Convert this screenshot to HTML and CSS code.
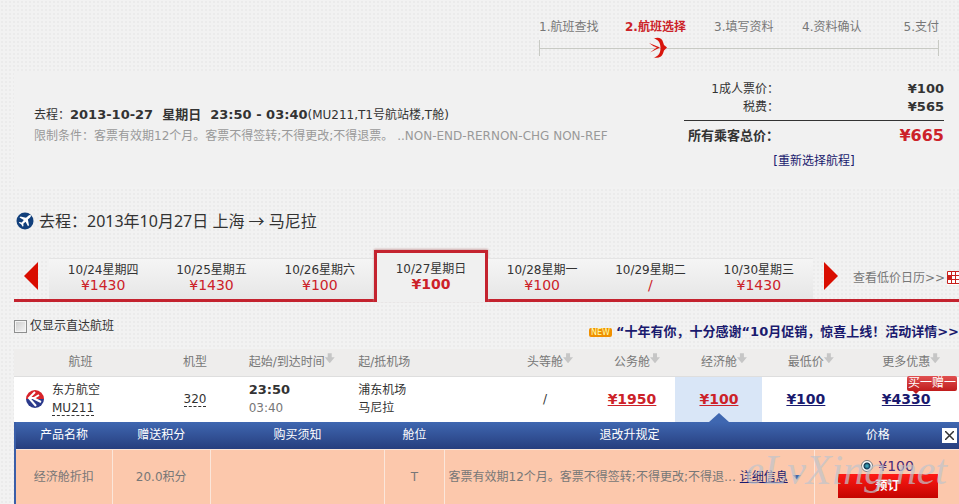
FILE: index.html
```html
<!DOCTYPE html>
<html lang="zh-CN">
<head>
    <meta charset="UTF-8">
    <meta name="viewport" content="width=device-width, initial-scale=1.0">
    <title>航班选择</title>
    <link rel="stylesheet" href="styles.css">
</head>

<body>

    <!-- Booking steps -->
    <header class="top">
        <div class="steps">
            <ol class="step-list">
                <li>1.航班查找</li>
                <li class="current">2.航班选择</li>
                <li>3.填写资料</li>
                <li>4.资料确认</li>
                <li>5.支付</li>
            </ol>
            <div class="step-line">
                <svg class="swallow" width="19" height="22" viewBox="0 0 19 22">
                    <path fill="#d8150c" d="M5 1.500c4-1.500 8-.5 9 3.500l1 3 3 2.500-3 3-1 3c-1.500 4-5 5-9 4 4-1 6.500-4 6.500-9.500S9 2.500 5 1.500z"/>
                    <path fill="#d8150c" d="M0 6l11 4.500L1 15.500l6-4.500z"/>
                    <path fill="#f1f1f1" d="M4 9l4 1.600L5 12l1.500-1.200z"/>
                </svg>
            </div>
        </div>
    </header>

    <main>
        <!-- Chosen flight and price -->
        <section class="summary">
            <div class="trip">
                <p>去程：<strong>2013-10-27&nbsp; 星期日&nbsp; 23:50 - 03:40</strong>(MU211,T1号航站楼,T舱)</p>
                <p class="limits">限制条件：客票有效期12个月。客票不得签转;不得更改;不得退票。 ..NON-END-RERNON-CHG NON-REF</p>
            </div>
            <div class="total">
                <dl>
                    <dt>1成人票价：</dt><dd>¥100</dd>
                    <dt>税费：</dt><dd>¥565</dd>
                </dl>
                <dl class="sum">
                    <dt>所有乘客总价：</dt><dd>¥665</dd>
                </dl>
                <a href="#">[重新选择航程]</a>
            </div>
        </section>

        <h1>
            <svg width="18" height="18" viewBox="0 0 18 18">
                <circle cx="9" cy="9" r="8.5" fill="#12407c"/>
                <path fill="#fff" d="M14.800 3.200c-.9-.6-2 0-3 1L10 5.800 4.500 4.500l-1 1 4.300 2.600-2 2.300-2.300-.3-.7.700 2.400 1.500 1.500 2.500.8-.7-.2-2.300 2.300-2 2.400 4.400 1-1-1.100-5.600L13.600 6c1-1 1.800-2 1.200-2.800z"/>
            </svg>
            去程：2013年10月27日 上海 → 马尼拉
        </h1>

        <!-- Dates -->
        <nav class="dates">
            <button class="arrow prev" aria-label="前一周"></button>
            <ul>
                <li><a href="#">10/24星期四<b>¥1430</b></a></li>
                <li><a href="#">10/25星期五<b>¥1430</b></a></li>
                <li><a href="#">10/26星期六<b>¥100</b></a></li>
                <li class="active"><a href="#">10/27星期日<b>¥100</b></a></li>
                <li><a href="#">10/28星期一<b>¥100</b></a></li>
                <li><a href="#">10/29星期二<b>/</b></a></li>
                <li><a href="#">10/30星期三<b>¥1430</b></a></li>
            </ul>
            <button class="arrow next" aria-label="后一周"></button>
            <a class="calendar" href="#">查看低价日历&gt;&gt;
                <svg width="17" height="14" viewBox="0 0 17 14">
                    <path fill="#fff" d="M0 0h17v14H0z"/>
                    <path fill="none" stroke="#c8201c" d="M.5 .5h16v12H.5zM0 4.500h17M0 8.500h17M4.500 0v13M8.500 0v13M12.500 0v13"/>
                    <path fill="#c8201c" d="M1 5h3v3H1z"/>
                </svg>
            </a>
        </nav>

        <div class="options">
            <label><input type="checkbox">仅显示直达航班</label>
            <a href="#"><span class="new">NEW</span>“十年有你，十分感谢“10月促销，惊喜上线！活动详情&gt;&gt;</a>
        </div>

        <!-- Flights -->
        <table class="flights">
            <colgroup>
                <col class="w-flight"><col class="w-plane"><col class="w-time"><col class="w-port">
                <col class="w-fare"><col class="w-fare"><col class="w-fare"><col class="w-fare"><col>
            </colgroup>
            <thead>
                <tr>
                    <th>航班</th>
                    <th>机型</th>
                    <th class="left"><span class="sort">起始/到达时间</span></th>
                    <th class="left">起/抵机场</th>
                    <th><span class="sort">头等舱</span></th>
                    <th><span class="sort">公务舱</span></th>
                    <th><span class="sort">经济舱</span></th>
                    <th><span class="sort">最低价</span></th>
                    <th class="more"><span class="sort">更多优惠</span></th>
                </tr>
            </thead>
            <tbody>
                <tr>
                    <td>
                        <div class="airline">
                            <svg width="20" height="20" viewBox="0 0 20 20">
                                <path fill="#d8232a" d="M1 10a9 9 0 0 1 18 0z"/>
                                <path fill="#2b3a8c" d="M1 10a9 9 0 0 0 18 0z"/>
                                <path fill="none" stroke="#fff" stroke-width="2" d="M10 3L4 9l7 8M5 9h4l5-3M8 9l8 4"/>
                            </svg>
                            <span>东方航空<br><abbr>MU211</abbr></span>
                        </div>
                    </td>
                    <td><abbr>320</abbr></td>
                    <td class="left"><strong>23:50</strong><br><span class="arrive">03:40</span></td>
                    <td class="left">浦东机场<br>马尼拉</td>
                    <td>/</td>
                    <td><a class="fare red" href="#">¥1950</a></td>
                    <td class="chosen"><a class="fare red" href="#">¥100</a></td>
                    <td><a class="fare" href="#">¥100</a></td>
                    <td class="more"><a class="fare" href="#">¥4330</a><span class="gift">买一赠一</span></td>
                </tr>
            </tbody>
        </table>

        <!-- Products of the chosen fare -->
        <div class="products">
            <table>
                <colgroup>
                    <col class="w-name"><col class="w-points"><col class="w-notice"><col class="w-cabin"><col class="w-rules"><col>
                </colgroup>
                <thead>
                    <tr>
                        <th>产品名称</th>
                        <th>赠送积分</th>
                        <th>购买须知</th>
                        <th>舱位</th>
                        <th>退改升规定</th>
                        <th class="price">价格<button class="close" aria-label="关闭"><svg width="9" height="9" viewBox="0 0 9 9"><path stroke="#333" stroke-width="1.500" d="M0 0l9 9M9 0L0 9"/></svg></button></th>
                    </tr>
                </thead>
                <tbody>
                    <tr>
                        <td>经济舱折扣</td>
                        <td>20.0积分</td>
                        <td></td>
                        <td>T</td>
                        <td class="rules">客票有效期12个月。客票不得签转;不得更改;不得退… <a href="#">详细信息</a></td>
                        <td class="price">
                            <label><input type="radio" name="product" checked>¥100</label>
                            <button class="book">预订</button>
                        </td>
                    </tr>
                </tbody>
            </table>
            <span class="watermark">eLvXing.net</span>
        </div>
    </main>

</body>

</html>
```

FILE: styles.css
```css
* {
    box-sizing: border-box;
}

body {
    margin: 0;
    font: 12px/18px "DejaVu Sans", "Noto Sans CJK SC", sans-serif;
    color: #333;
    background: #f2f2f2 radial-gradient(#ebebeb 1px, transparent 1px) 0 0 / 4px 4px;
    overflow: hidden;
}

a {
    color: #1a1a6e;
    text-decoration: none;
}

p, ul, ol, dl, dd {
    margin: 0;
    padding: 0;
    list-style: none;
}

button {
    padding: 0;
    border: 0;
    font: inherit;
    cursor: pointer;
}

/* Steps */
.top {
    display: flex;
    justify-content: flex-end;
    height: 71px;
    padding: 18px 20px 0 0;
}

.steps {
    width: 400px;
    white-space: nowrap;
}

.step-list {
    display: grid;
    grid-template-columns: 86px 89px 88px 1fr auto;
    color: #777;
}

.step-list .current {
    color: #cc2229;
    font-weight: bold;
}

.step-line {
    display: flex;
    align-items: center;
    height: 16px;
    margin-top: 4px;
    padding-left: 109px;
    border: solid #c8cac4;
    border-width: 0 1px;
    background: linear-gradient(#c8cac4, #c8cac4) center / 100% 1px no-repeat;
}

.swallow {
    flex: none;
}

main {
    padding-left: 14px;
}

/* Summary */
.summary {
    display: flex;
    justify-content: space-between;
    height: 116px;
    padding: 9px 15px 0 20px;
    background: #f1f1f1;
    white-space: nowrap;
}

.trip {
    padding-top: 24px;
    line-height: 21px;
}

.trip strong {
    font-size: 13px;
}

.limits {
    color: #999;
}

.total {
    width: 260px;
    text-align: center;
}

.total dl {
    display: grid;
    grid-template-columns: 95px 1fr;
    text-align: right;
}

.total dd {
    font-size: 13px;
    font-weight: bold;
}

.total .sum {
    margin: 4px 0;
    padding-top: 3px;
    border-top: 1px solid #333;
    font-size: 13px;
    font-weight: bold;
    line-height: 24px;
}

.total .sum dd {
    color: #cc2229;
    font-size: 16px;
}

h1 {
    display: flex;
    align-items: center;
    gap: 5px;
    margin: 22px 0 17px 2px;
    font: 16px/24px "Noto Sans", "Noto Sans CJK SC", sans-serif;
}

/* Dates */
.dates {
    display: flex;
    height: 52px;
    border-bottom: 3px solid #c4232f;
    white-space: nowrap;
}

.arrow {
    flex: none;
    width: 14px;
    height: 28px;
    margin-top: 12px;
    background: #d90d00;
}

.prev {
    margin-left: 10px;
    margin-right: 11px;
    clip-path: polygon(100% 0, 100% 100%, 0 50%);
}

.next {
    margin-left: 11px;
    clip-path: polygon(0 0, 100% 50%, 0 100%);
}

.dates ul {
    display: flex;
    flex: none;
    width: 764px;
}

.dates li {
    flex: 1;
    height: 41px;
    margin-top: 8px;
    background: linear-gradient(#f5f5f5, #e6e6e6);
    border-top: 1px solid #e4e4e4;
    text-align: center;
}

.dates li a {
    display: block;
    padding-top: 4px;
    color: #333;
    line-height: 15px;
}

.dates li b {
    display: block;
    color: #cc2229;
    font-size: 14px;
    font-weight: normal;
}

.dates .active {
    flex: 0 0 114px;
    height: 52px;
    margin-top: 0;
    padding-top: 5px;
    border: 3px solid #c4232f;
    border-bottom: 0;
    background: #f0f0f0;
    box-shadow: 0 -1px 2px #c9a5a5;
}

.dates .active b {
    font-weight: bold;
}

.calendar {
    display: flex;
    align-items: center;
    gap: 2px;
    padding: 7px 0 0 15px;
    color: #777;
}

.calendar svg {
    flex: none;
}

/* Filter and promotion */
.options {
    display: flex;
    justify-content: space-between;
    height: 47px;
    white-space: nowrap;
}

.options label {
    display: flex;
    align-items: center;
    gap: 3px;
    height: 18px;
    margin-top: 15px;
}

.options input {
    appearance: none;
    width: 13px;
    height: 13px;
    margin: 0;
    border: 1px solid #8e8f8f;
    background: linear-gradient(135deg, #ccc, #f6f6f6);
    box-shadow: inset 0 0 0 1px #f4f4f4;
}

.options a {
    display: flex;
    align-items: center;
    gap: 4px;
    height: 18px;
    margin-top: 21px;
    font-size: 13px;
    font-weight: bold;
}

.new {
    padding: 0 2px;
    border-radius: 2px;
    background: #f09000;
    color: #ffffb0;
    font-size: 8px;
    font-weight: normal;
    line-height: 9px;
}

/* Tables */
table {
    width: 100%;
    border-collapse: collapse;
    table-layout: fixed;
    white-space: nowrap;
}

th, td {
    padding: 0;
    font-weight: normal;
    text-align: center;
}

.w-flight { width: 14.1%; }
.w-plane { width: 10.1%; }
.w-time { width: 11.6%; }
.w-port { width: 15.8%; }
.w-fare { width: 9.2%; }

.w-name { width: 10.2%; }
.w-points { width: 10.4%; }
.w-notice { width: 18.5%; }
.w-cabin { width: 6.3%; }
.w-rules { width: 39.3%; }

.flights th {
    height: 27px;
    background: #eeedec;
    border-bottom: 1px solid #dedede;
    color: #777;
}

.flights td {
    height: 46px;
    background: #fff;
}

.flights .left {
    padding-left: 6px;
    text-align: left;
}

.flights .more {
    position: relative;
    padding-left: 4px;
}

.flights strong {
    font-size: 13px;
}

.flights .chosen {
    position: relative;
    background: #d9e6f7;
}

.chosen::after {
    content: "";
    position: absolute;
    bottom: 0;
    left: 50%;
    border: solid transparent;
    border-width: 0 10px 9px;
    border-bottom-color: #3f67b0;
    transform: translateX(-50%);
}

.sort {
    position: relative;
}

.sort::after {
    content: "";
    position: absolute;
    top: -2px;
    left: 100%;
    width: 10px;
    height: 10px;
    background: #c6c6c6;
    clip-path: polygon(30% 0, 70% 0, 70% 40%, 100% 40%, 50% 100%, 0 40%, 30% 40%);
}

.airline {
    display: flex;
    align-items: center;
    gap: 7px;
    padding-left: 11px;
    text-align: left;
}

abbr {
    display: inline-block;
    border-bottom: 1px dashed #333;
    line-height: 14px;
}

.arrive {
    color: #777;
}

.fare {
    font-size: 14px;
    font-weight: bold;
    text-decoration: underline;
}

.red {
    color: #cc2229;
}

.gift {
    position: absolute;
    top: -1px;
    right: 2px;
    padding: 0 1px;
    border-radius: 2px;
    background: linear-gradient(#e05050, #c01c1c);
    color: #fff;
    line-height: 15px;
}

.gift::after {
    content: "";
    position: absolute;
    top: 100%;
    left: 6px;
    border: solid transparent;
    border-width: 3px 3px 0;
    border-top-color: #c01c1c;
}

/* Products */
.products {
    position: relative;
    border-left: 2px solid #3a5ea8;
}

.products thead {
    background: linear-gradient(#3f67b1, #273e7e);
}

.products th {
    height: 27px;
    border-bottom: 1px solid #fbe6da;
    color: #fff;
}

.products td {
    height: 56px;
    border-right: 1px solid #fbe6da;
    background: #fcc8ac;
    color: #777;
}

.products td:last-child {
    border-right: 0;
}

.products th.price {
    position: relative;
    padding-right: 18px;
}

.products td.price {
    padding: 8px 0 0 1px;
    vertical-align: top;
}

.close {
    position: absolute;
    top: 6px;
    right: 2px;
    display: grid;
    place-items: center;
    width: 15px;
    height: 15px;
    background: #fff;
}

.products .rules {
    padding-left: 4px;
    text-align: left;
}

.rules a {
    text-decoration: underline;
}

.rules a::after {
    content: "";
    display: inline-block;
    margin-left: 5px;
    border: solid transparent;
    border-width: 5px 4px 0;
    border-top-color: #4068a8;
    vertical-align: middle;
}

.price label {
    display: flex;
    align-items: center;
    justify-content: center;
    gap: 5px;
    height: 16px;
    color: #4a2a78;
    font-size: 14px;
}

.price input {
    appearance: none;
    width: 12px;
    height: 12px;
    margin: 0;
    border: 1px solid #777;
    border-radius: 50%;
    background: #fff;
}

.price input:checked {
    background: radial-gradient(#3aa0b8 1px, #12344c 3px, #fff 4px);
}

.book {
    width: 100px;
    height: 24px;
    background: linear-gradient(#ff1a14, #c40400);
    color: #fff;
    font-weight: bold;
}

.watermark {
    position: absolute;
    right: 12px;
    bottom: 14px;
    color: #c0c4cc;
    font: italic 42px/42px "Liberation Serif", cursive;
    opacity: 0.7;
    pointer-events: none;
}
```
